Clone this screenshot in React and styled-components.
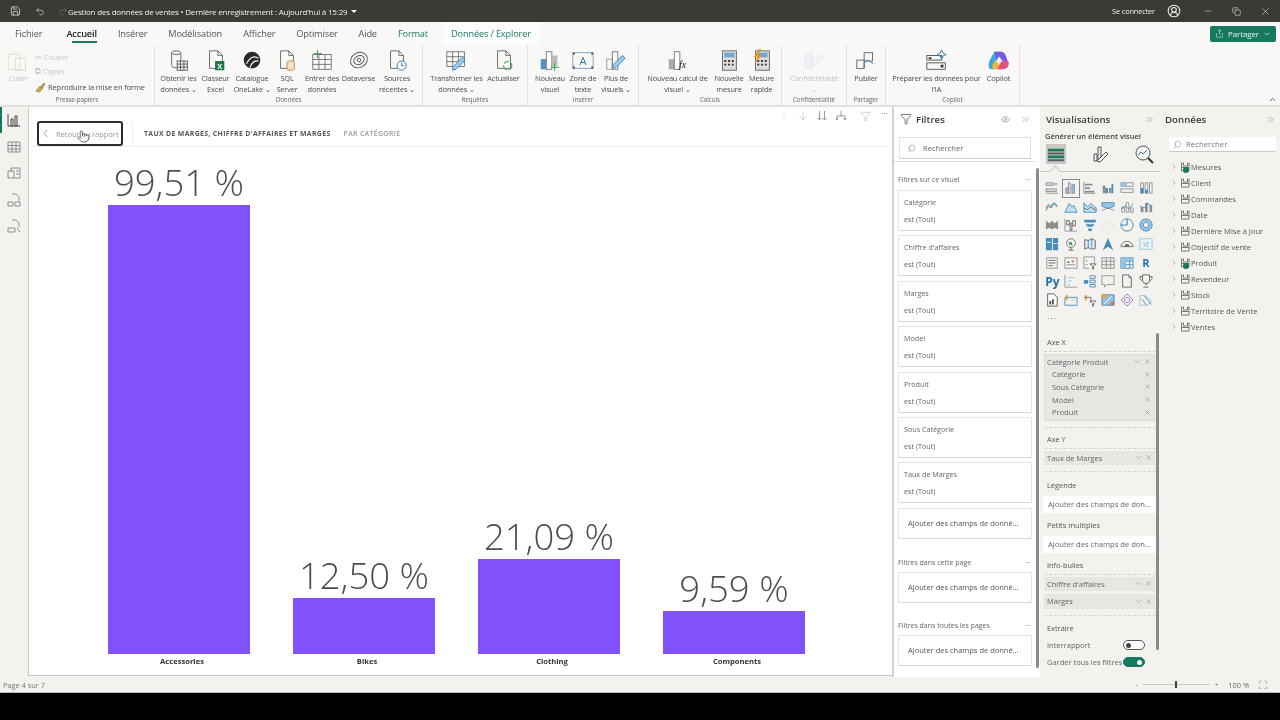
import styled, { createGlobalStyle } from 'styled-components';
import { ChevronDown, ChevronRight, ChevronLeft, ChevronsRight, X, Minus, Copy, Eye, Search, ArrowUp, ArrowDown, Filter, Undo2, Redo2, Save, UserCircle2, Share, Pointer, ChevronUp, Maximize } from 'lucide-react';

const GlobalStyle = createGlobalStyle`
  html, body { margin: 0; padding: 0; background: #000; overflow: hidden; }
  body { font-family: "Open Sans", "Liberation Sans", sans-serif; color: #444; }
  * { box-sizing: border-box; }
`;

const Page = styled.div`
  width: 1280px;
  height: 720px;
  display: flex;
  flex-direction: column;
  background: #000;
  filter: blur(0.35px);
`;

/* barre de titre */
const TitleBar = styled.div`
  height: 22px;
  background: #3b3a36;
  color: #eee;
  display: flex;
  align-items: center;
  padding-left: 10px;
  font-size: 8px;
  flex: none;
`;

const TitleIcons = styled.div`
  display: flex;
  gap: 8px;
  width: 58px;
  flex: none;
  align-items: center;
`;

const TitleText = styled.span`
  white-space: nowrap;
  letter-spacing: -0.025em;
`;

const TitleCaret = styled.span`
  margin-left: 4px;
  width: 0;
  height: 0;
  border: 3px solid transparent;
  border-top: 3px solid #eee;
  border-bottom: 0;
`;

const TitleRight = styled.div`
  margin-left: auto;
  display: flex;
  align-items: center;
  padding-right: 9px;
  white-space: nowrap;
`;

const WinButtons = styled.div`
  display: flex;
  gap: 19px;
  margin-left: 22px;
  align-items: center;
`;

const SignIn = styled.span`
  margin-right: 12px;
  font-size: 7.4px;
  letter-spacing: -0.02em;
`;

/* onglets */
const TabRow = styled.div`
  height: 23px;
  background: #f8f8f7;
  display: flex;
  align-items: center;
  padding: 0 4px 0 15px;
  gap: 21px;
  flex: none;
`;

const Tab = styled.div`
  position: relative;
  font-size: 9.2px;
  height: 23px;
  line-height: 23px;
  white-space: nowrap;
  letter-spacing: -0.015em;
  margin-left: ${(p) => (p.$panel ? 2 : 0)}px;
  margin-right: ${(p) => (p.$first ? 3 : 0)}px;
  color: ${(p) => (p.$green ? '#1f7a63' : p.$active ? '#222' : '#555')};
  font-weight: ${(p) => (p.$active ? 600 : 400)};
  background: ${(p) => (p.$panel ? '#fdfdfd' : 'transparent')};
  box-shadow: ${(p) => (p.$panel ? '8px 0 0 #fdfdfd, -8px 0 0 #fdfdfd' : 'none')};

  &::after {
    content: '';
    display: ${(p) => (p.$active ? 'block' : 'none')};
    position: absolute;
    left: 6px;
    right: 0;
    bottom: 2px;
    height: 2px;
    background: #1f7a63;
  }
`;

const ShareButton = styled.div`
  margin-left: auto;
  height: 16px;
  width: 66px;
  background: #16795f;
  color: #e8f3ef;
  border-radius: 2px;
  font-size: 7.8px;
  display: flex;
  align-items: center;
  justify-content: center;
  gap: 4px;
`;

/* ruban */
const Ribbon = styled.div`
  height: 62px;
  background: #f8f8f7;
  border-bottom: 2px solid #e2e1de;
  display: flex;
  position: relative;
  flex: none;
`;

const Group = styled.div`
  width: ${(p) => p.$w}px;
  flex: none;
  display: flex;
  flex-direction: column;
  border-right: 1px solid #e3e2df;
`;

const GroupItems = styled.div`
  flex: 1;
  display: flex;
  justify-content: center;
  padding: 4px ${(p) => p.$shift || 0}px 0 0;
  min-height: 0;
`;

const GroupLabel = styled.div`
  height: 12px;
  font-size: 6.2px;
  line-height: 13px;
  text-align: center;
  color: #666;
  white-space: nowrap;
  flex: none;
`;

const RibbonBtn = styled.div`
  width: ${(p) => p.$w}px;
  display: flex;
  flex-direction: column;
  align-items: center;
  flex: none;
  font-size: 7.4px;
  line-height: 11px;
  text-align: center;
  letter-spacing: -0.02em;
  color: ${(p) => (p.$faded ? '#c4c4c2' : '#4c4c4c')};
  white-space: nowrap;
`;

const RibbonIcon = styled.svg`
  width: 24px;
  height: 24px;
  flex: none;
  opacity: ${(p) => (p.$faded ? 0.45 : 1)};
`;

const ClipColumn = styled.div`
  display: flex;
  flex-direction: column;
  gap: 4px;
  padding-top: 2px;
  margin-left: 2px;
`;

const ClipRow = styled.div`
  display: flex;
  align-items: center;
  gap: 2px;
  font-size: 7.5px;
  height: 12px;
  letter-spacing: -0.015em;
  white-space: nowrap;
  color: ${(p) => (p.$faded ? '#c8c8c6' : '#4c4c4c')};
`;

const Collapse = styled.div`
  position: absolute;
  right: 3px;
  bottom: 1px;
  color: #333;
  line-height: 0;
`;

const Small = styled.span`
  font-size: 6px;
  margin-left: 1px;
`;

/* corps */
const Main = styled.div`
  height: 570px;
  flex: none;
  display: flex;
  background: #f3f2ef;
`;

const Rail = styled.div`
  width: 28px;
  flex: none;
  display: flex;
  flex-direction: column;
  align-items: center;
  gap: 12.5px;
  padding-top: 6px;
  position: relative;
  color: #666;

  &::before {
    content: '';
    position: absolute;
    left: 0;
    top: 0;
    width: 2px;
    height: 26px;
    background: #16795f;
  }
`;

const Canvas = styled.div`
  width: 864px;
  flex: none;
  background: #fff;
  border-left: 1px solid #c9c8c5;
  border-bottom: 1px solid #c9c8c5;
  margin-bottom: 1px;
  display: flex;
  flex-direction: column;
`;

const CanvasHead = styled.div`
  height: 40px;
  flex: none;
  display: flex;
  align-items: flex-start;
  padding: 14px 0 0 8px;
  border-bottom: 1px solid #f0f0ef;
  position: relative;
`;

const BackButton = styled.div`
  width: 86px;
  height: 25px;
  border: 2px solid #2c2c2c;
  border-radius: 3px;
  display: flex;
  align-items: center;
  gap: 4px;
  font-size: 7.6px;
  letter-spacing: -0.01em;
  color: #999;
  position: relative;
  white-space: nowrap;
`;

const Cursor = styled.div`
  position: absolute;
  left: 38px;
  top: 7px;
  color: #333;
  line-height: 0;
  & svg { fill: #fff; }
`;

const DrillTitle = styled.div`
  margin-left: 9px;
  padding-left: 11px;
  border-left: 1px solid #eee;
  height: 25px;
  line-height: 25px;
  font-size: 6.9px;
  font-weight: 700;
  letter-spacing: 0.05em;
  color: #555;
  white-space: nowrap;
`;

const DrillSub = styled(DrillTitle)`
  border: 0;
  margin-left: 2px;
  color: #999;
  font-weight: 600;
`;

const HeadTools = styled.div`
  position: absolute;
  right: 2px;
  top: 3px;
  display: flex;
  gap: 7px;
  color: #a3a3a3;
  align-items: center;
`;

const HeadDots = styled.span`
  font-size: 9px;
  line-height: 8px;
  margin: -4px 2px 0 3px;
  color: #777;
`;

const ChartArea = styled.div`
  flex: 1;
  display: flex;
  align-items: flex-end;
  gap: 43px;
  padding: 0 0 6px 79px;
  min-height: 0;
`;

const BarColumn = styled.div`
  width: 142px;
  display: flex;
  flex-direction: column;
  align-items: center;
  flex: none;
`;

const BarValue = styled.div`
  font-size: 36.5px;
  font-weight: 300;
  line-height: 46px;
  color: #4d4d4d;
  white-space: nowrap;
`;

const Bar = styled.div`
  width: 100%;
  background: #8152fb;
`;

const BarName = styled.div`
  font-size: 7.6px;
  font-weight: 700;
  line-height: 15px;
  color: #333;
  padding-left: 6px;
`;

/* filtres */
const FilterPane = styled.div`
  width: 148px;
  flex: none;
  background: #fff;
  border-left: 2px solid #d2d1ce;
  display: flex;
  position: relative;
`;

const FilterBody = styled.div`
  width: 142px;
  flex: none;
  display: flex;
  flex-direction: column;
`;

const PaneHead = styled.div`
  height: 24px;
  flex: none;
  display: flex;
  align-items: center;
  padding: 0 ${(p) => p.$right || 5}px 0 ${(p) => p.$left || 6}px;
  font-size: 9.7px;
  font-weight: 600;
  color: #3a3a3a;
  gap: 4px;
`;

const HeadEnd = styled.div`
  margin-left: auto;
  display: flex;
  align-items: center;
  gap: 10px;
  color: #666;
`;

const FilterSearch = styled.div`
  margin: 6px 5px 0 5px;
  height: 22px;
  flex: none;
  border: 1px solid #e2e1df;
  border-bottom: 1px solid #cfcfcd;
  display: flex;
  align-items: center;
  gap: 7px;
  padding-left: 7px;
  font-size: 7.6px;
  color: #666;
`;

const FilterRule = styled.div`
  height: 3px;
  flex: none;
  border-bottom: 1px solid #dcdbd8;
`;

const SectionTitle = styled.div`
  height: 12px;
  flex: none;
  margin: ${(p) => p.$top}px 5px ${(p) => p.$bottom}px 4px;
  display: flex;
  justify-content: space-between;
  align-items: center;
  font-size: 7px;
  color: #666;
  white-space: nowrap;
`;

const FilterCard = styled.div`
  margin: 0 4px 4.4px 4px;
  height: 41px;
  flex: none;
  border: 1px solid #e6e5e3;
  border-bottom: 1px solid #d8d7d5;
  padding: 6px 5px 0;
  font-size: 7.2px;
  color: #666;
  display: flex;
  flex-direction: column;
  gap: 7px;
  line-height: 10px;
`;

const AddCard = styled.div`
  margin: 0 4px;
  height: 31px;
  flex: none;
  border: 1px solid #e6e5e3;
  border-bottom: 1px solid #d8d7d5;
  padding-left: 9px;
  display: flex;
  align-items: center;
  font-size: 7.5px;
  color: #555;
  white-space: nowrap;
`;

const Scroll = styled.div`
  width: 3px;
  flex: none;
  background: #8b8b8b;
  border-radius: 2px;
  margin-top: ${(p) => p.$top}px;
  height: ${(p) => p.$h}px;
`;

/* visualisations */
const VisPane = styled.div`
  width: 120px;
  flex: none;
  display: flex;
  flex-direction: column;
`;

const GenLabel = styled.div`
  font-size: 7.5px;
  font-weight: 600;
  padding-left: 5px;
  flex: none;
  color: #444;
  line-height: 11px;
  white-space: nowrap;
`;

const GenIcons = styled.div`
  display: flex;
  padding: 2px 0 0 6px;
  height: 30px;
  flex: none;
  gap: 24px;
  align-items: flex-start;
  border-bottom: 1px solid #c9c8c5;
  position: relative;

  &::after {
    content: '';
    position: absolute;
    left: 11px;
    bottom: -4px;
    width: 7px;
    height: 7px;
    background: #f3f2ef;
    border-left: 1px solid #c9c8c5;
    border-top: 1px solid #c9c8c5;
    transform: rotate(45deg);
  }
`;

const GenActive = styled.svg`
  width: 20px;
  height: 20px;
  flex: none;
`;

const GenIcon = styled.svg`
  width: 20px;
  height: 20px;
  flex: none;
`;

const VisGrid = styled.div`
  display: grid;
  grid-template-columns: repeat(6, 18.7px);
  grid-auto-rows: 18.6px;
  padding: 7px 0 0 3px;
  flex: none;
`;

const VisCell = styled.div`
  display: flex;
  align-items: center;
  justify-content: center;
  border: 1px solid ${(p) => (p.$on ? '#8a8a88' : 'transparent')};
  font-size: ${(p) => (p.$py ? 12 : 11)}px;
  font-weight: 700;
  color: #1f6fb0;
`;

const VisSvg = styled.svg`
  width: 14px;
  height: 14px;
  opacity: 0.85;
`;

const More = styled.div`
  font-size: 9px;
  letter-spacing: 1px;
  padding-left: 7px;
  line-height: 10px;
  margin-top: 5px;
  color: #777;
  flex: none;
`;

const WellsWrap = styled.div`
  flex: 1;
  min-height: 0;
  display: flex;
  margin-top: 7px;
  border-top: 1px solid #f8f8f6;
`;

const Wells = styled.div`
  width: 116px;
  flex: none;
  padding: 4px 0 0 4px;
  display: flex;
  flex-direction: column;
`;

const WellTitle = styled.div`
  font-size: 7.4px;
  color: #555;
  height: 12px;
  line-height: 12px;
  padding-left: 3px;
  margin-top: ${(p) => p.$top || 0}px;
  margin-bottom: ${(p) => p.$bottom || 0}px;
  white-space: nowrap;
  flex: none;
`;

const WellBox = styled.div`
  border-top: 1px dashed #d4d3d0;
  border-bottom: 1px dashed #d4d3d0;
  padding: 2px 0 6px;
  margin-top: 3px;
  display: flex;
  flex-direction: column;
  gap: ${(p) => p.$gap || 0}px;
  flex: none;
`;

const FieldGroup = styled.div`
  background: #e7e6e3;
  margin-right: 1px;
  border: 1px solid #dddcd9;
  padding-bottom: 1px;
`;

const FieldRow = styled.div`
  height: ${(p) => p.$h || 12.7}px;
  display: flex;
  align-items: center;
  padding: 0 3px 0 ${(p) => (p.$sub ? 7 : p.$solo ? 3 : 2)}px;
  font-size: 7.5px;
  color: #666;
  white-space: nowrap;
  background: ${(p) => (p.$solo ? '#e7e6e3' : 'transparent')};
  margin-right: ${(p) => (p.$solo ? 1 : 0)}px;
  flex: none;
`;

const FieldEnd = styled.span`
  margin-left: auto;
  display: flex;
  gap: 2px;
  align-items: center;
  color: #666;
`;

const DropBox = styled.div`
  background: #fff;
  height: 17px;
  margin: 5px 0 0 -1px;
  padding-left: 5px;
  display: flex;
  align-items: center;
  font-size: 7.6px;
  color: #666;
  white-space: nowrap;
  flex: none;
`;

const ToggleRow = styled.div`
  display: flex;
  align-items: center;
  height: 17px;
  flex: none;
  justify-content: space-between;
  padding: 0 11px 0 3px;
  font-size: 7.5px;
  color: #666;
  white-space: nowrap;
`;

const Toggle = styled.div`
  width: 22px;
  height: 10px;
  border-radius: 5px;
  flex: none;
  background: ${(p) => (p.$on ? '#16795f' : '#fff')};
  border: 1px solid ${(p) => (p.$on ? '#16795f' : '#555')};
  display: flex;
  align-items: center;
  justify-content: ${(p) => (p.$on ? 'flex-end' : 'flex-start')};
  padding: 0 2px;

  &::after {
    content: '';
    width: 5px;
    height: 5px;
    border-radius: 50%;
    background: ${(p) => (p.$on ? '#fff' : '#444')};
  }
`;

/* données */
const DataPane = styled.div`
  width: 120px;
  flex: none;
  display: flex;
  flex-direction: column;
`;

const DataSearch = styled.div`
  margin: 6px 4px 0 9px;
  height: 15px;
  flex: none;
  background: #fff;
  border-bottom: 1px solid #c9c8c5;
  border-radius: 2px;
  display: flex;
  align-items: center;
  gap: 4px;
  padding-left: 4px;
  font-size: 7.8px;
  color: #777;
`;

const Tree = styled.div`
  padding: 7px 0 0 10px;
  display: flex;
  flex-direction: column;
`;

const TreeRow = styled.div`
  height: 16px;
  display: flex;
  align-items: center;
  gap: 1.500px;
  font-size: 7.6px;
  color: #555;
  white-space: nowrap;
`;

const TableMark = styled.span`
  position: relative;
  width: 10px;
  height: 10px;
  flex: none;
  line-height: 0;
`;

const CheckBadge = styled.span`
  position: absolute;
  left: 3px;
  top: 5px;
  width: 6px;
  height: 6px;
  border-radius: 50%;
  background: #16795f;
`;

/* statut */
const StatusBar = styled.div`
  height: 16px;
  flex: none;
  background: #f3f2ef;
  display: flex;
  align-items: center;
  padding: 0 12px 0 3px;
  font-size: 7.4px;
  color: #777;
  border-bottom: 1px solid #bbb;
`;

const ZoomBox = styled.div`
  margin-left: auto;
  display: flex;
  align-items: center;
  gap: 5px;
  color: #666;
`;

const ZoomTrack = styled.div`
  width: 66px;
  height: 1px;
  background: #c9c8c5;
  position: relative;
`;

const ZoomThumb = styled.div`
  position: absolute;
  left: 32px;
  top: -3px;
  width: 2px;
  height: 7px;
  background: #444;
`;

const ZoomPct = styled.span`
  margin: 0 4px 0 5px;
`;

const BlackStrip = styled.div`
  height: 27px;
  flex: none;
  background: #000;
`;

const line = { fill: 'none', stroke: '#666', strokeWidth: 1 };
const thin = { fill: 'none', stroke: '#888', strokeWidth: 0.9 };

function Doc() {
  return <path d="M6 2h9l5 5v14H6z M15 2v5h5" {...line} />;
}

function Grid({ x, y, w, h, c = '#666' }) {
  const s = { fill: 'none', stroke: c, strokeWidth: 0.9 };
  return (
    <g {...s}>
      <rect x={x} y={y} width={w} height={h} />
      <path d={`M${x} ${y + h / 3}h${w}M${x} ${y + (2 * h) / 3}h${w}M${x + w / 3} ${y}v${h}M${x + (2 * w) / 3} ${y}v${h}`} />
    </g>
  );
}

function Pencil({ x = 0, y = 0 }) {
  return <path transform={`translate(${x} ${y})`} d="M4 21l1-4L15 7l3 3L8 20z" fill="#9fcbe8" stroke="#2a7ab0" strokeWidth="0.9" />;
}

function Calc() {
  return (
    <g>
      <rect x="6" y="2" width="15" height="21" fill="#ddd" stroke="#666" />
      <rect x="8" y="4" width="11" height="5" fill="#6fa5d0" />
      <path d="M8 12h2v2H8zM12 12h2v2h-2zM16 12h2v2h-2zM8 16h2v2H8zM12 16h2v2h-2zM16 16h2v2h-2z" fill="#333" />
    </g>
  );
}

const ribbonIcons = {
  paste: (
    <g {...thin} stroke="#d9b784">
      <rect x="3" y="6" width="12" height="16" />
      <rect x="10" y="10" width="11" height="13" stroke="#aaa" />
      <path d="M6 6c0-3 6-3 6 0" />
    </g>
  ),
  getData: (
    <g>
      <path d="M5 4v14c0 3 10 3 10 0V4" {...line} />
      <ellipse cx="10" cy="4" rx="5" ry="2" {...line} />
      <rect x="11" y="13" width="11" height="10" fill="#f8f8f7" />
      <Grid x={11} y={13} w={11} h={10} c="#444" />
    </g>
  ),
  excel: (
    <g>
      <Doc />
      <rect x="12" y="13" width="10" height="10" fill="#1d7a45" />
      <text x="17" y="21.5" fontSize="8" textAnchor="middle" fill="#fff" fontWeight="700">X</text>
    </g>
  ),
  onelake: (
    <g>
      <circle cx="13" cy="12" r="9" fill="#2b2b2b" />
      <path d="M7 16c4-8 9-9 13-6M11 20c1-5 5-8 9-7" fill="none" stroke="#fff" strokeWidth="1.3" />
    </g>
  ),
  sql: (
    <g>
      <Doc />
      <rect x="13" y="13" width="8" height="10" rx="2" fill="#f5e0c8" stroke="#d08a40" />
    </g>
  ),
  enter: (
    <g>
      <Grid x={3} y={6} w={20} h={16} />
      <path d="M8 1v9M4 5h9" stroke="#2e9e55" fill="none" />
    </g>
  ),
  dataverse: (
    <g fill="none" stroke="#555">
      <ellipse cx="13" cy="12" rx="9.5" ry="8" transform="rotate(-30 13 12)" />
      <ellipse cx="13" cy="12" rx="6" ry="4.6" transform="rotate(-30 13 12)" />
      <circle cx="13" cy="12" r="2" />
    </g>
  ),
  recent: (
    <g>
      <Doc />
      <circle cx="18" cy="18" r="5" fill="#f8f8f7" stroke="#2a7ab0" />
      <path d="M18 15v3h2.5" fill="none" stroke="#2a7ab0" />
    </g>
  ),
  transform: (
    <g>
      <Grid x={2} y={3} w={19} h={16} />
      <Pencil x={4} y={2} />
    </g>
  ),
  refresh: (
    <g>
      <Doc />
      <circle cx="17" cy="18" r="4.5" fill="none" stroke="#46a35a" strokeWidth="1.2" strokeDasharray="6 2" />
    </g>
  ),
  newVisual: (
    <g>
      <rect x="3" y="11" width="6" height="11" fill="#4b93c7" />
      <rect x="9" y="3" width="6" height="19" fill="#fff" stroke="#777" />
      <rect x="15" y="7" width="6" height="12" fill="#bbb" />
      <path d="M18 15v9M14 20h9" stroke="#3aa35a" fill="none" />
    </g>
  ),
  textBox: (
    <g>
      <rect x="2" y="4" width="22" height="17" fill="none" stroke="#7b9db8" />
      <path d="M2 4h2v2H2zM22 4h2v2h-2zM2 19h2v2H2zM22 19h2v2h-2z" fill="#446" />
      <text x="13" y="17" fontSize="12" textAnchor="middle" fill="#2a7ab0">A</text>
    </g>
  ),
  moreVisuals: (
    <g>
      <rect x="3" y="11" width="6" height="11" fill="none" stroke="#999" />
      <rect x="9" y="3" width="6" height="19" fill="none" stroke="#777" />
      <Pencil x={5} y={0} />
    </g>
  ),
  calcVisual: (
    <g>
      <rect x="3" y="11" width="6" height="11" fill="#aaa" />
      <rect x="9" y="3" width="6" height="19" fill="#fff" stroke="#777" />
      <text x="18" y="21" fontSize="11" textAnchor="middle" fontStyle="italic" fontFamily="Liberation Serif" fill="#222">fx</text>
    </g>
  ),
  measure: <Calc />,
  quick: (
    <g>
      <Calc />
      <path d="M10 0L4 9h4l-3 7 8-9H9l3-7z" fill="#e79a2a" />
    </g>
  ),
  privacy: (
    <g fill="none" stroke="#bcd0dc">
      <path d="M4 6l7-3v18H4z" fill="#e6eef3" />
      <path d="M11 15l9-9 3 3-9 9z" fill="#eef3f6" />
    </g>
  ),
  publish: (
    <g {...line}>
      <rect x="3" y="12" width="8" height="9" />
      <rect x="11" y="4" width="9" height="9" />
      <path d="M11 21v-6l4-3 6 4" stroke="#2a7ab0" />
    </g>
  ),
  prepare: (
    <g>
      <rect x="2" y="7" width="16" height="5" fill="none" stroke="#555" />
      <rect x="2" y="15" width="20" height="7" fill="none" stroke="#555" />
      <rect x="4" y="9" width="3" height="2" fill="#333" />
      <rect x="17" y="17" width="3" height="3" fill="#333" />
      <path d="M18 1l1.500 3.500L23 6l-3.500 1.500L18 11l-1.500-3.500L13 6l3.500-1.500z" fill="none" stroke="#2a7ab0" />
    </g>
  ),
  copilot: (
    <g>
      <path d="M8 3h8l-4 10-4 9H5C1 22 1 17 3 12z" fill="#3fa7e0" />
      <path d="M8 3h7c3 0 5 2 6 6l2 6-8-3-5-1z" fill="#7a5be0" />
      <path d="M17 22H9c-2 0-4-2-3-5l3-5 5 1z" fill="#f0b52e" />
      <path d="M16 13h7c2 4-1 9-6 9h-6z" fill="#e84f8a" />
      <path d="M10 13l3-5 3 4-3 5z" fill="#f4f4f4" />
    </g>
  ),
};

function RibbonButton({ w, icon, faded, lines }) {
  return (
    <RibbonBtn $w={w} $faded={faded}>
      <RibbonIcon viewBox="0 0 26 26" $faded={faded}>{ribbonIcons[icon]}</RibbonIcon>
      {lines.map((t) => (
        <span key={t}>{t}</span>
      ))}
    </RibbonBtn>
  );
}

const G = '#7a7e82';
const B = '#2a7ab0';
const L = '#86bbdf';

const gridIcons = [
  [['M1 2h8v3H1zM1 9h12v3H1z', '#d9d9d6', G], ['M9 2h5v3H9z', L, null], ['M1 14h14', null, G]],
  [['M2 8h3v6H2zM9 4h3v10H9z', L, G], ['M5 2h2v12H5z', null, G]],
  [['M1 1v13h13', null, G], ['M2 3h9v2H2zM2 7h6v2H2zM2 11h11v2H2z', G, null]],
  [['M2 5h3v9H2zM9 8h3v6H9z', G, null], ['M5 8h3v6H5zM12 3h2v11h-2z', B, null]],
  [['M1 2h14v4H1zM1 9h14v4H1z', null, G], ['M1 2h7v4H1z', L, null]],
  [['M2 2h3v12H2zM7 2h3v12H7zM12 2h3v12h-3z', null, G], ['M2 8h3v6H2zM7 10h3v4H7z', B, null]],
  [['M1 12l3-5 3 2 3-5 4 4', null, '#444'], ['M1 9l3-4 3 2 3-4 4 3', null, B]],
  [['M1 14l5-10 3 4 2-2 4 8z', '#bcdcf0', B]],
  [['M1 3l4 5 4-4 6 5v5H1z', '#bcdcf0', B], ['M1 9l4 2 4-3 6 4', null, '#444']],
  [['M1 3h14v4l-7 3-7-3z', L, B], ['M1 12l7-3 7 3', null, G]],
  [['M2 8h3v6H2zM7 3h3v11H7zM12 9h3v5h-3z', null, G], ['M1 11l5-4 4 3 5-6', null, B]],
  [['M2 8h3v6H2zM7 3h3v11H7zM12 6h3v8h-3z', G, null], ['M1 7l5 2 4-5 5 3', null, B]],
  [['M1 3l4 3 3-3 3 3 4-3v10l-4-2-3 2-3-2-4 2z', '#7d7d7a', null]],
  [['M1 1v14h14', null, G], ['M3 3h3v5H3zM7 6h2v8H7zM10 3h3v6h-3z', null, '#444']],
  [['M1 2h14l-1 3H2z', B, null], ['M3 7h10l-2 3H5z', B, null], ['M6 12h4v3H6z', B, null]],
  [['M2 12h1v1H2zM5 8h1v1H5zM8 11h1v1H8zM10 5h1v1h-1zM13 8h1v1h-1zM4 4h1v1H4z', L, null]],
  [['M8 8V1a7 7 0 1 1-7 7z', null, '#26638f'], ['M8 1a7 7 0 0 0-7 7h7z', '#e8f2f8', B]],
  [['M8 1a7 7 0 1 0 .01 0zM8 5a3 3 0 1 1-.01 0z', L, B]],
  [['M1 1h7v14H1zM9 1h6v6H9zM9 8h6v7H9z', B, null], ['M2 6h5', null, '#fff']],
  [['M8 2a5 5 0 1 0 .01 0z', '#fff', '#4a4a4a'], ['M5 5l4 1 1 4-4-1z', '#3f8f5a', null], ['M8 12v3M5 15h6', null, '#444']],
  [['M2 3l4 1 4-2 4 2v9l-4 1-4-2-4 2z', '#dce9f3', '#444'], ['M6 4v9M10 2v10', null, B]],
  [['M8 1l6 14-6-4-6 4z', '#2a7ab0', null]],
  [['M1 11a7 6 0 0 1 14 0z', null, '#555'], ['M5 11a3 3 0 0 1 6 0z', '#555', null]],
  [['M1 2h14v12H1z', '#eef5fa', L], ['M4 6h2v5M8 6h3v2H8v3h3', null, L]],
  [['M2 2h12v12H2z', null, G], ['M4 5h8M4 8h8M4 11h5', null, '#444']],
  [['M1 2h14v12H1z', null, G], ['M3 10h10', null, G], ['M5 5l2 3H3z', '#2e9e55', null], ['M10 8l2-3H8z', '#c94c4c', null]],
  [['M1 1h12v7M1 1v13h6', null, G], ['M3 5h2v1H3zM3 9h2v1H3z', '#444', null], ['M8 9h7l-3 3v3h-1v-3z', null, '#444']],
  [['M1 2h14v12H1zM1 6h14M1 10h14M6 2v12M11 2v12', null, '#777']],
  [['M1 2h14v12H1zM1 6h14M1 10h14M6 2v12M11 2v12', null, B], ['M1 2h14v4H1zM1 2h5v12H1z', L, null]],
  null,
  'Py',
  [['M1 1v14h14', null, G], ['M4 4h8M4 8h5M4 12h3', null, L]],
  [['M1 7h5v4H1z', B, null], ['M8 2h6v3H8zM8 7h6v3H8zM8 12h6v3H8z', null, B]],
  [['M1 2h14v10H7l-3 3v-3H1z', null, G]],
  [['M3 1h7l3 3v11H3z', null, '#444'], ['M10 1v3h3', null, B]],
  [['M4 1h8v6a4 4 0 0 1-8 0zM8 11v2M5 15h6', null, '#444'], ['M4 3H1c0 3 1 4 3 5M12 3h3c0 3-1 4-3 5', null, '#444']],
  [['M3 1h7l4 4v10H3z', '#fff', '#333'], ['M5 9h2v4H5zM8 7h2v6H8z', '#333', null]],
  [['M1 5h14v9H1z', null, B], ['M2 2l3 1-1 6-2-2z', '#e79a2a', null], ['M8 8h5', null, L]],
  [['M2 2l3 1-1 6-2-2z', '#e79a2a', null], ['M1 5h8v6M8 9h7l-3 3v3h-1v-3z', null, '#555']],
  [['M1 2h14v12H1z', L, B], ['M3 13L12 4', null, '#fff'], ['M1 1h5v5H1z', '#e79a2a', null], ['M11 10h4v4h-4z', '#d25f2a', null]],
  [['M8 1l7 7-7 7-7-7z', null, '#8b5fb8'], ['M8 5a3 3 0 1 0 .01 0z', null, '#8b5fb8']],
  [['M1 3h6l7 6-4 5H1z', null, L], ['M6 3l8 10M3 7l6 7', null, B]],
];

function VisIcon({ data }) {
  return (
    <VisSvg viewBox="0 0 16 16">
      {data.map(([d, fill, stroke], i) => (
        <path key={i} d={d} fill={fill || 'none'} stroke={stroke || 'none'} />
      ))}
    </VisSvg>
  );
}

function TableIcon() {
  return (
    <svg width="10" height="10" viewBox="0 0 10 10">
      <path d="M1.500 1h2v3h4V1h1.500v8H1.500zM1.500 5.500h7.500" fill="none" stroke="#6b6b6b" strokeWidth="0.9" />
    </svg>
  );
}

const filterCards = ['Catégorie', "Chiffre d'affaires", 'Marges', 'Model', 'Produit', 'Sous Catégorie', 'Taux de Marges'];

const bars = [
  { name: 'Accessories', value: '99,51 %', height: 449 },
  { name: 'Bikes', value: '12,50 %', height: 56 },
  { name: 'Clothing', value: '21,09 %', height: 95 },
  { name: 'Components', value: '9,59 %', height: 43 },
];

const tables = ['Mesures', 'Client', 'Commandes', 'Date', 'Dernière Mise à Jour', 'Objectif de vente', 'Produit', 'Revendeur', 'Stock', 'Territoire de Vente', 'Ventes'];

const tabs = ['Fichier', 'Accueil', 'Insérer', 'Modélisation', 'Afficher', 'Optimiser', 'Aide'];

function FieldTools({ chevron = true }) {
  return (
    <FieldEnd>
      {chevron && <ChevronDown size={9} strokeWidth={1} />}
      <X size={7} strokeWidth={1.4} />
    </FieldEnd>
  );
}

export default function App() {
  return (
    <Page>
      <GlobalStyle />
      <TitleBar>
        <TitleIcons>
          <Save size={12} strokeWidth={1.5} />
          <Undo2 size={11} strokeWidth={1.3} style={{ marginLeft: 6 }} />
          <Redo2 size={11} strokeWidth={1.3} color="#777" style={{ marginLeft: 5 }} />
        </TitleIcons>
        <TitleText>Gestion des données de ventes • Dernière enregistrement : Aujourd'hui à 15:29</TitleText>
        <TitleCaret />
        <TitleRight>
          <SignIn>Se connecter</SignIn>
          <UserCircle2 size={14} strokeWidth={1.8} />
          <WinButtons>
            <Minus size={10} strokeWidth={1.2} />
            <Copy size={9} strokeWidth={1.5} />
            <X size={11} strokeWidth={1.2} />
          </WinButtons>
        </TitleRight>
      </TitleBar>

      <TabRow>
        {tabs.map((t) => (
          <Tab key={t} $active={t === 'Accueil'} $first={t === 'Fichier'}>{t}</Tab>
        ))}
        <Tab $green>Format</Tab>
        <Tab $green $panel>Données / Explorer</Tab>
        <ShareButton>
          <Share size={9} strokeWidth={1.4} />
          Partager
          <ChevronDown size={8} />
        </ShareButton>
      </TabRow>

      <Ribbon>
        <Group $w={155}>
          <GroupItems $shift={6}>
            <RibbonButton w={30} icon="paste" faded lines={['Coller']} />
            <ClipColumn>
              <ClipRow $faded>✂ Couper</ClipRow>
              <ClipRow $faded>⧉ Copier</ClipRow>
              <ClipRow>
                <svg width="11" height="11" viewBox="0 0 12 12"><path d="M1 10l4-5 3 2-3 4zM6 5l4-4 1 1-3 5z" fill="#d2a63c" stroke="#555" strokeWidth="0.5" /></svg>
                Reproduire la mise en forme
              </ClipRow>
            </ClipColumn>
          </GroupItems>
          <GroupLabel>Presse-papiers</GroupLabel>
        </Group>
        <Group $w={268}>
          <GroupItems>
            <RibbonButton w={37} icon="getData" lines={['Obtenir les', 'données ⌄']} />
            <RibbonButton w={37} icon="excel" lines={['Classeur', 'Excel']} />
            <RibbonButton w={36} icon="onelake" lines={['Catalogue', 'OneLake ⌄']} />
            <RibbonButton w={34} icon="sql" lines={['SQL', 'Server']} />
            <RibbonButton w={36} icon="enter" lines={['Entrer des', 'données']} />
            <RibbonButton w={37} icon="dataverse" lines={['Dataverse']} />
            <RibbonButton w={40} icon="recent" lines={['Sources', 'récentes ⌄']} />
          </GroupItems>
          <GroupLabel>Données</GroupLabel>
        </Group>
        <Group $w={105}>
          <GroupItems>
            <RibbonButton w={57} icon="transform" lines={['Transformer les', 'données ⌄']} />
            <RibbonButton w={37} icon="refresh" lines={['Actualiser']} />
          </GroupItems>
          <GroupLabel>Requêtes</GroupLabel>
        </Group>
        <Group $w={111}>
          <GroupItems>
            <RibbonButton w={33} icon="newVisual" lines={['Nouveau', 'visuel']} />
            <RibbonButton w={33} icon="textBox" lines={['Zone de', 'texte']} />
            <RibbonButton w={33} icon="moreVisuals" lines={['Plus de', 'visuels ⌄']} />
          </GroupItems>
          <GroupLabel>Insérer</GroupLabel>
        </Group>
        <Group $w={143}>
          <GroupItems>
            <RibbonButton w={68} icon="calcVisual" lines={['Nouveau calcul de', 'visuel ⌄']} />
            <RibbonButton w={35} icon="measure" lines={['Nouvelle', 'mesure']} />
            <RibbonButton w={30} icon="quick" lines={['Mesure', 'rapide']} />
          </GroupItems>
          <GroupLabel>Calculs</GroupLabel>
        </Group>
        <Group $w={65}>
          <GroupItems>
            <RibbonButton w={60} icon="privacy" faded lines={['Confidentialité', '⌄']} />
          </GroupItems>
          <GroupLabel>Confidentialité</GroupLabel>
        </Group>
        <Group $w={39}>
          <GroupItems>
            <RibbonButton w={30} icon="publish" lines={['Publier']} />
          </GroupItems>
          <GroupLabel>Partager</GroupLabel>
        </Group>
        <Group $w={134}>
          <GroupItems>
            <RibbonButton w={92} icon="prepare" lines={['Préparer les données pour', "l'IA"]} />
            <RibbonButton w={32} icon="copilot" lines={['Copilot']} />
          </GroupItems>
          <GroupLabel>Copilot</GroupLabel>
        </Group>
        <Collapse><ChevronUp size={9} strokeWidth={2} /></Collapse>
      </Ribbon>

      <Main>
        <Rail>
          <svg width="14" height="14" viewBox="0 0 14 14"><path d="M1 1v12h12M4 6h2v7H4zM8 3h2v10H8z" fill="none" stroke="#444" /></svg>
          <svg width="14" height="14" viewBox="0 0 14 14"><path d="M1 2h12v10H1zM1 5.500h12M1 9h12M5 2v10M9 2v10" fill="none" stroke="#777" strokeWidth="0.8" /></svg>
          <svg width="14" height="14" viewBox="0 0 14 14"><path d="M1 5h6v7H1zM4 5V2h9v10H7M9 5h3M9 8h3" fill="none" stroke="#777" strokeWidth="0.8" /></svg>
          <svg width="14" height="14" viewBox="0 0 14 14"><path d="M5 1h4l3 3v4M1 9h5v4H1zM8 9h5v4H8z" fill="none" stroke="#777" strokeWidth="0.8" /></svg>
          <svg width="14" height="14" viewBox="0 0 14 14"><path d="M5 1h4l3 3v4M1 9h7v4H1zM10 9l3 4" fill="none" stroke="#777" strokeWidth="0.8" /></svg>
        </Rail>

        <Canvas>
          <CanvasHead>
            <BackButton>
              <ChevronLeft size={13} strokeWidth={1.1} color="#666" />
              <span>Retour au rapport</span>
              <Cursor><Pointer size={13} strokeWidth={1.3} /></Cursor>
            </BackButton>
            <DrillTitle>TAUX DE MARGES, CHIFFRE D'AFFAIRES ET MARGES</DrillTitle>
            <DrillSub>PAR CATÉGORIE</DrillSub>
            <HeadTools>
              <ArrowUp size={12} strokeWidth={1} color="#ddd" />
              <ArrowDown size={12} strokeWidth={1} />
              <svg width="12" height="12" viewBox="0 0 12 12"><path d="M3.500 1v9M1.500 8l2 2 2-2M8.500 1v9M6.500 8l2 2 2-2" fill="none" stroke="#999" /></svg>
              <svg width="12" height="12" viewBox="0 0 12 12"><path d="M6 1v5M2 10V6h8v4M1 8l1 2 1-2M9 8l1 2 1-2" fill="none" stroke="#999" /></svg>
              <Filter size={11} strokeWidth={1} style={{ marginLeft: 6 }} />
              <HeadDots>···</HeadDots>
            </HeadTools>
          </CanvasHead>
          <ChartArea>
            {bars.map((b) => (
              <BarColumn key={b.name}>
                <BarValue>{b.value}</BarValue>
                <Bar style={{ height: b.height }} />
                <BarName>{b.name}</BarName>
              </BarColumn>
            ))}
          </ChartArea>
        </Canvas>

        <FilterPane>
          <FilterBody>
            <PaneHead>
              <Filter size={12} strokeWidth={1.5} color="#444" />
              Filtres
              <HeadEnd>
                <Eye size={9} strokeWidth={1.3} />
                <ChevronsRight size={11} strokeWidth={1} />
              </HeadEnd>
            </PaneHead>
            <FilterSearch>
              <Search size={9} strokeWidth={1.2} style={{ transform: 'scaleX(-1)' }} />
              Rechercher
            </FilterSearch>
            <FilterRule />
            <SectionTitle $top={11} $bottom={5}>Filtres sur ce visuel<span>···</span></SectionTitle>
            {filterCards.map((c) => (
              <FilterCard key={c}>
                <span>{c}</span>
                <span>est (Tout)</span>
              </FilterCard>
            ))}
            <AddCard>Ajouter des champs de donné...</AddCard>
            <SectionTitle $top={18} $bottom={3}>Filtres dans cette page<span>···</span></SectionTitle>
            <AddCard>Ajouter des champs de donné...</AddCard>
            <SectionTitle $top={17} $bottom={3}>Filtres dans toutes les pages<span>···</span></SectionTitle>
            <AddCard>Ajouter des champs de donné...</AddCard>
          </FilterBody>
          <Scroll $top={61} $h={500} />
        </FilterPane>

        <VisPane>
          <PaneHead>
            Visualisations
            <HeadEnd>
              <ChevronsRight size={11} strokeWidth={1} />
            </HeadEnd>
          </PaneHead>
          <GenLabel>Générer un élément visuel</GenLabel>
          <GenIcons>
            <GenActive viewBox="0 0 21 21">
              <rect width="21" height="21" fill="#c9c8c5" />
              <path d="M2 5h17v3H2zM2 12h17v3H2z" fill="#1f7a50" />
              <path d="M2 9h17v2H2zM2 16h17v2H2z" fill="#54606a" />
            </GenActive>
            <GenIcon viewBox="0 0 20 20">
              <path d="M4 10h3v7H4zM8 3h3v14H8z" fill="none" stroke="#555" />
              <path d="M7 17l9-9 2 2-8 8z" fill="#fff" stroke="#555" />
            </GenIcon>
            <GenIcon viewBox="0 0 20 20">
              <circle cx="9" cy="9" r="7" fill="none" stroke="#555" />
              <path d="M4 11l3-3 2 2 4-4" fill="none" stroke="#2a7ab0" />
              <path d="M14 14l5 5" stroke="#333" strokeWidth="2" />
            </GenIcon>
          </GenIcons>
          <VisGrid>
            {gridIcons.map((data, i) => (
              <VisCell key={i} $on={i === 1} $py={data === 'Py'}>
                {data === null ? 'R' : data === 'Py' ? 'Py' : <VisIcon data={data} />}
              </VisCell>
            ))}
          </VisGrid>
          <More>···</More>
          <WellsWrap>
            <Wells>
              <WellTitle>Axe X</WellTitle>
              <WellBox>
                <FieldGroup>
                  <FieldRow>Catégorie Produit<FieldTools /></FieldRow>
                  <FieldRow $sub>Catégorie<FieldTools chevron={false} /></FieldRow>
                  <FieldRow $sub>Sous Catégorie<FieldTools chevron={false} /></FieldRow>
                  <FieldRow $sub>Model<FieldTools chevron={false} /></FieldRow>
                  <FieldRow $sub>Produit<FieldTools chevron={false} /></FieldRow>
                </FieldGroup>
              </WellBox>
              <WellTitle $top={5}>Axe Y</WellTitle>
              <WellBox>
                <FieldRow $solo $h={14}>Taux de Marges<FieldTools /></FieldRow>
              </WellBox>
              <WellTitle $top={7}>Légende</WellTitle>
              <DropBox>Ajouter des champs de don...</DropBox>
              <WellTitle $top={6}>Petits multiples</WellTitle>
              <DropBox>Ajouter des champs de don...</DropBox>
              <WellTitle $top={6}>Info-bulles</WellTitle>
              <WellBox $gap={3}>
                <FieldRow $solo $h={14}>Chiffre d'affaires<FieldTools /></FieldRow>
                <FieldRow $solo $h={15}>Marges<FieldTools /></FieldRow>
              </WellBox>
              <WellTitle $top={6} $bottom={3}>Extraire</WellTitle>
              <ToggleRow>Interrapport<Toggle /></ToggleRow>
              <ToggleRow>Garder tous les filtres<Toggle $on /></ToggleRow>
            </Wells>
            <Scroll $top={1} $h={317} />
          </WellsWrap>
        </VisPane>

        <DataPane>
          <PaneHead $left={5} $right={4}>
            Données
            <HeadEnd>
              <ChevronsRight size={11} strokeWidth={1} />
            </HeadEnd>
          </PaneHead>
          <DataSearch>
            <Search size={9} strokeWidth={1.2} style={{ transform: 'scaleX(-1)' }} />
            Rechercher
          </DataSearch>
          <Tree>
            {tables.map((t) => (
              <TreeRow key={t}>
                <ChevronRight size={8} strokeWidth={1.1} />
                <TableMark>
                  <TableIcon />
                  {(t === 'Mesures' || t === 'Produit') && <CheckBadge />}
                </TableMark>
                {t}
              </TreeRow>
            ))}
          </Tree>
        </DataPane>
      </Main>

      <StatusBar>
        Page 4 sur 7
        <ZoomBox>
          <Small>-</Small>
          <ZoomTrack><ZoomThumb /></ZoomTrack>
          <Small>+</Small>
          <ZoomPct>100 %</ZoomPct>
          <Maximize size={10} strokeWidth={1} />
        </ZoomBox>
      </StatusBar>
      <BlackStrip />
    </Page>
  );
}
